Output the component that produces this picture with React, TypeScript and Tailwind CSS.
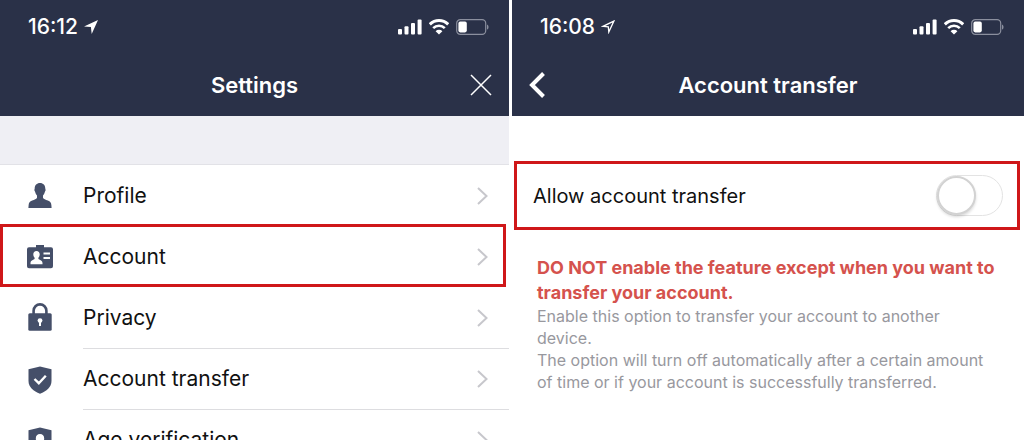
import { useState, type ReactNode } from "react";

function LocationArrow({ filled }: { filled: boolean }) {
  return (
    <svg viewBox="0 0 14 14" className="size-[14px]" aria-hidden="true">
      {filled ? (
        <path d="M14 0 0 6.6l6.9.5L7.7 14z" fill="currentColor" />
      ) : (
        <path d="M12.8 1.2 2 6.3l5.3.5.5 5.2z" fill="none" stroke="currentColor" strokeWidth="1.3" />
      )}
    </svg>
  );
}

function SignalIcon() {
  return (
    <svg viewBox="0 0 24 16" className="h-4 w-6" fill="currentColor" aria-hidden="true">
      <rect x="0" y="10" width="4" height="5.5" rx="1" />
      <rect x="6.5" y="7.3" width="4" height="8.2" rx="1" />
      <rect x="13" y="4" width="4" height="11.5" rx="1" />
      <rect x="19.6" y="0.5" width="4" height="15" rx="1" />
    </svg>
  );
}

function WifiIcon() {
  return (
    <svg viewBox="0 0 20 16" className="h-4 w-5" fill="none" stroke="currentColor" aria-hidden="true">
      <path d="M.8 5.4a13 13 0 0 1 18.4 0" strokeWidth="3" />
      <path d="M4.2 9.2a8.200 8.200 0 0 1 11.6 0" strokeWidth="2.6" />
      <path d="M10 15.6 6.6 12.2a4.800 4.800 0 0 1 6.8 0z" fill="currentColor" stroke="none" />
    </svg>
  );
}

function BatteryIcon() {
  return (
    <svg viewBox="0 0 33 16" className="h-4 w-[33px]" aria-hidden="true">
      <rect x="0.7" y="0.7" width="29" height="14.6" rx="3.6" fill="none" stroke="#8b8f9e" strokeWidth="1.2" />
      <rect x="2.4" y="2.6" width="8.4" height="10.8" rx="1.8" fill="currentColor" />
      <path d="M31 5.4c2 .8 2 4.4 0 5.2z" fill="#8b8f9e" />
    </svg>
  );
}

function StatusBar({ time, filled }: { time: string; filled: boolean }) {
  return (
    <div className="flex h-[54px] items-center justify-between pr-5 pl-7">
      <div className="flex items-center gap-[6px]">
        <span className="text-[21px] leading-6 font-medium">{time}</span>
        <LocationArrow filled={filled} />
      </div>
      <div className="flex items-center gap-[7px]">
        <SignalIcon />
        <WifiIcon />
        <BatteryIcon />
      </div>
    </div>
  );
}

function ProfileIcon() {
  return (
    <svg viewBox="-0.5 1 29 29" className="size-7" fill="currentColor" aria-hidden="true">
      <path d="M14 1c3.3 0 5.5 2.3 5.5 5.8 0 .6.4.9.3 1.7-.1.8-.6 1-.8 1.7-.4 1.7-1 2.7-1.9 3.7v2.3c.8 1.4 2.5 2 5 2.9 2.5.9 3.5 2.3 3.7 4.9l.2 2.8H2l.2-2.8c.2-2.6 1.2-4 3.7-4.9 2.5-.9 4.2-1.5 5-2.9v-2.3c-.9-1-1.5-2-1.9-3.700-.2-.7-.7-.9-.8-1.700-.1-.8.3-1.100.3-1.700C8.500 3.300 10.700 1 14 1z" />
    </svg>
  );
}

function AccountIcon() {
  return (
    <svg viewBox="0 1 28 28" className="size-7" aria-hidden="true">
      <path d="M10 2h8v2.200h7a2 2 0 0 1 2 2v17a2 2 0 0 1-2 2H3a2 2 0 0 1-2-2v-17a2 2 0 0 1 2-2h7z" fill="currentColor" />
      <path d="M10.500 8c2 0 3.200 1.300 3.200 3.300 0 1.500-.5 2.600-1.300 3.500v1.300c.8.9 4.100 1.100 4.100 3.900v1.200h-12V20c0-2.800 3.300-3 4.100-3.900v-1.300c-.8-.9-1.300-2-1.300-3.500 0-2 1.200-3.300 3.200-3.300z" fill="#fff" />
      <path d="M17.500 10.400H24M17.500 15H24" stroke="#fff" strokeWidth="2" />
    </svg>
  );
}

function PrivacyIcon() {
  return (
    <svg viewBox="0 2 28 28" className="size-7 overflow-visible" aria-hidden="true">
      <path d="M7.600 11.500V7.800a6.400 6.400 0 0 1 12.800 0v3.700" fill="none" stroke="currentColor" strokeWidth="2.600" />
      <rect x="2.300" y="10.200" width="23.400" height="17.500" rx="1.500" fill="currentColor" />
      <circle cx="14" cy="17.600" r="2.400" fill="#fff" />
      <path d="M14 18v5" stroke="#fff" strokeWidth="2" />
    </svg>
  );
}

const SHIELD = "M14 0.500 25.500 3.300V15c0 6-5 10.300-11.500 12.700C7.500 25.300 2.500 21 2.500 15V3.300z";

function TransferIcon() {
  return (
    <svg viewBox="0 0 28 28" className="size-7" aria-hidden="true">
      <path d={SHIELD} fill="currentColor" />
      <path d="m8.500 13 4.300 4.200 7-7.400" fill="none" stroke="#fff" strokeWidth="2.400" />
    </svg>
  );
}

function AgeIcon() {
  return (
    <svg viewBox="0 0 28 28" className="size-7" aria-hidden="true">
      <path d={SHIELD} fill="currentColor" />
      <path d="M14 7c2.600 0 4.200 1.800 4.200 4.400 0 1.800-.6 3.300-1.600 4.400v1.500c1 1 3.400 1.200 3.400 3.700H8c0-2.500 2.400-2.700 3.400-3.700v-1.500c-1-1.100-1.600-2.600-1.600-4.400C9.800 8.800 11.400 7 14 7z" fill="#fff" />
    </svg>
  );
}

function Chevron() {
  return (
    <svg viewBox="0 0 11 18" className="h-[18px] w-[11px] text-[#c7c7cc]" fill="none" stroke="currentColor" strokeWidth="2" aria-hidden="true">
      <path d="m1 1 8.500 8L1 17" />
    </svg>
  );
}

type Item = { id: string; label: string; icon: ReactNode; divider?: boolean; highlighted?: boolean };

const ITEMS: Item[] = [
  { id: "profile", label: "Profile", icon: <ProfileIcon /> },
  { id: "account", label: "Account", icon: <AccountIcon />, highlighted: true },
  { id: "privacy", label: "Privacy", icon: <PrivacyIcon />, divider: true },
  { id: "account-transfer", label: "Account transfer", icon: <TransferIcon />, divider: true },
  { id: "age-verification", label: "Age verification", icon: <AgeIcon />, divider: true },
];

function SettingsRow({ item }: { item: Item }) {
  return (
    <li className="relative">
      <a href={`#${item.id}`} className="flex h-[61px] items-stretch pl-[26px]">
        <span className="flex w-[57px] items-center text-[#454f69]">{item.icon}</span>
        <span
          className={`flex flex-1 items-center justify-between border-b pr-[21px] ${
            item.divider ? "border-[#dddde0]" : "border-transparent"
          }`}
        >
          <span className="text-[21px] leading-7">{item.label}</span>
          <Chevron />
        </span>
      </a>
      {item.highlighted && (
        <span className="pointer-events-none absolute -top-[3px] right-[3px] bottom-px left-0 border-3 border-[#cf1719]" />
      )}
    </li>
  );
}

function SettingsScreen() {
  return (
    <section>
      <header className="bg-[#2a3148] text-white">
        <StatusBar time="16:12" filled />
        <div className="grid h-[62px] grid-cols-[1fr_auto_1fr] items-center px-[17px]">
          <span />
          <h1 className="text-[22px] leading-7 font-semibold">Settings</h1>
          <button type="button" aria-label="Close" className="justify-self-end">
            <svg viewBox="0 0 22 22" className="size-[22px]" stroke="currentColor" strokeWidth="1.500" aria-hidden="true">
              <path d="m1 1 20 20M21 1 1 21" />
            </svg>
          </button>
        </div>
      </header>
      <div className="h-[49px] border-b border-[#e2e2e7] bg-[#efeff4]" />
      <ul className="pt-px">
        {ITEMS.map((item) => (
          <SettingsRow key={item.id} item={item} />
        ))}
      </ul>
    </section>
  );
}

function TransferScreen() {
  const [allowed, setAllowed] = useState(false);

  return (
    <section>
      <header className="bg-[#2a3148] text-white">
        <StatusBar time="16:08" filled={false} />
        <div className="grid h-[62px] grid-cols-[1fr_auto_1fr] items-center px-[17px]">
          <button type="button" aria-label="Back">
            <svg viewBox="0 0 17 26" className="h-[26px] w-[17px]" fill="none" stroke="currentColor" strokeWidth="4" aria-hidden="true">
              <path d="M14.500 1.500 3 13l11.500 11.500" />
            </svg>
          </button>
          <h2 className="text-[22px] leading-7 font-semibold">Account transfer</h2>
          <span />
        </div>
      </header>

      <div className="mt-[45px] mr-1 ml-[2px] flex h-[69px] items-center justify-between border-3 border-[#cf1719] pr-[14px] pl-4">
        <label htmlFor="allow-transfer" className="text-[20px] leading-7">
          Allow account transfer
        </label>
        <input
          id="allow-transfer"
          type="checkbox"
          role="switch"
          checked={allowed}
          onChange={(e) => setAllowed(e.target.checked)}
          className="h-[41px] w-[67px] appearance-none rounded-full border border-[#e3e3e3] bg-white before:block before:size-[39px] before:rounded-full before:border-2 before:border-[#d2d2d2] before:bg-white before:shadow-[0_2px_3px_rgba(0,0,0,0.15)] checked:bg-green-500 checked:before:translate-x-[26px]"
        />
      </div>

      <div className="mt-[25px] pr-5 pl-[25px]">
        <p className="text-[18px] leading-[25px] font-bold text-[#d5524d]">
          DO NOT enable the feature except when you want to
          <br />
          transfer your account.
        </p>
        <p className="text-[16px] leading-[22px] text-[#98989e]">
          Enable this option to transfer your account to another
          <br />
          device.
          <br />
          The option will turn off automatically after a certain amount
          <br />
          of time or if your account is successfully transferred.
        </p>
      </div>
    </section>
  );
}

export default function App() {
  return (
    <main className="grid h-screen grid-cols-[509fr_512fr] gap-[3px] overflow-hidden bg-white font-['Inter',sans-serif] text-[#111111]">
      <SettingsScreen />
      <TransferScreen />
    </main>
  );
}
